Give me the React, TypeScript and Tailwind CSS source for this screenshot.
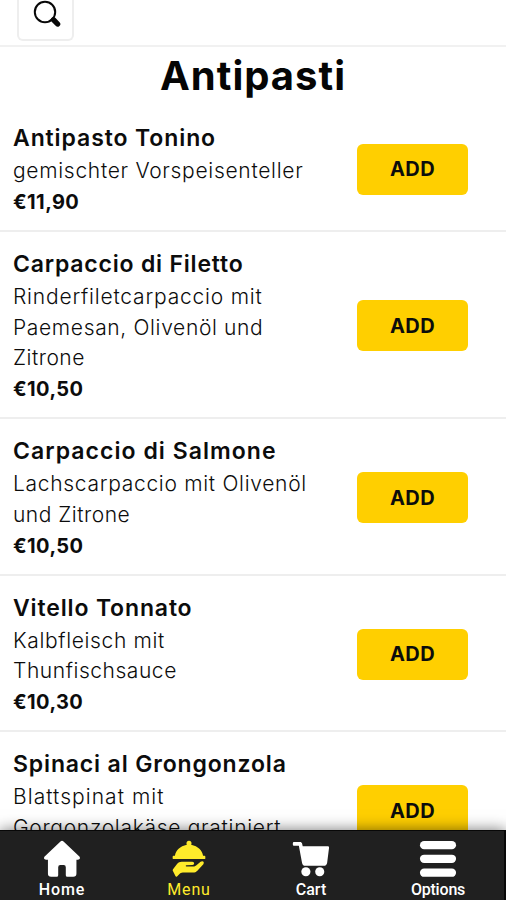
import clsx from "clsx";
import type { ReactNode } from "react";

type Dish = {
	name: string;
	nameTracking: string;
	lines: { text: string; tracking: string }[];
	price?: string;
};

const dishes: Dish[] = [
	{
		name: "Antipasto Tonino",
		nameTracking: "tracking-[0.9px]",
		lines: [{ text: "gemischter Vorspeisenteller", tracking: "tracking-[0.7px]" }],
		price: "€11,90",
	},
	{
		name: "Carpaccio di Filetto",
		nameTracking: "tracking-[0.8px]",
		lines: [
			{ text: "Rinderfiletcarpaccio mit", tracking: "tracking-[0.8px]" },
			{ text: "Paemesan, Olivenöl und", tracking: "tracking-[0.65px]" },
			{ text: "Zitrone", tracking: "tracking-[0.5px]" },
		],
		price: "€10,50",
	},
	{
		name: "Carpaccio di Salmone",
		nameTracking: "tracking-[1.05px]",
		lines: [
			{ text: "Lachscarpaccio mit Olivenöl", tracking: "tracking-[0.7px]" },
			{ text: "und Zitrone", tracking: "tracking-[0.5px]" },
		],
		price: "€10,50",
	},
	{
		name: "Vitello Tonnato",
		nameTracking: "tracking-[0.85px]",
		lines: [
			{ text: "Kalbfleisch mit", tracking: "tracking-[0.65px]" },
			{ text: "Thunfischsauce", tracking: "tracking-[0.55px]" },
		],
		price: "€10,30",
	},
	{
		name: "Spinaci al Grongonzola",
		nameTracking: "tracking-[0.85px]",
		lines: [
			{ text: "Blattspinat mit", tracking: "tracking-[1.05px]" },
			{ text: "Gorgonzolakäse gratiniert", tracking: "tracking-[0.7px]" },
		],
	},
];

const SearchIcon = () => (
	<svg width="28" height="28" viewBox="0 0 28 28" fill="none" stroke="#080808">
		<circle cx="12" cy="12" r="10.2" strokeWidth="2" />
		<path d="M18.6 18.8l2 2" strokeWidth="3" />
		<path d="M20.6 19.8l4 4.2" strokeWidth="5.4" strokeLinecap="round" />
	</svg>
);

const HomeIcon = () => (
	<svg width="40" height="40" viewBox="0 0 40 40" fill="currentColor">
		<path d="M18.4 1.6a2.3 2.3 0 0 1 3.2 0L38 17.2c1.7 1.6.9 3.6-1.2 3.6h-1.6v14.4a3.4 3.4 0 0 1-3.4 3.4h-6.2a1.6 1.6 0 0 1-1.6-1.6v-8.4a2.2 2.2 0 0 0-2.2-2.2h-3.6a2.2 2.2 0 0 0-2.2 2.2V37a1.6 1.6 0 0 1-1.6 1.6H8.6a3.4 3.4 0 0 1-3.4-3.4V20.8H3.2c-2.1 0-2.9-2-1.2-3.6z" />
	</svg>
);

const MenuIcon = () => (
	<svg width="40" height="40" viewBox="0 0 40 40" fill="currentColor">
		<path d="M20 .8a2.7 2.7 0 0 1 2.3 4.1C29.4 6.4 34 10.8 34.8 16.6h1.5a.9.9 0 0 1 .9.9v1.6a.9.9 0 0 1-.9.9H3.7a.9.9 0 0 1-.9-.9v-1.6a.9.9 0 0 1 .9-.9h1.5C6 10.8 10.6 6.4 17.7 4.9A2.7 2.7 0 0 1 20 .8z" />
		<path d="M3.2 32.9c-.5-.8-.4-1.3 0-2l4.2-5.6c1.3-1.7 2.8-2.5 5-2.5h11c2.6 0 2.7 3.2.2 3.5l-6.4.4c-.9.2-.8 1.2.1 1.2l7 .1c1.5 0 2.5-.5 3.5-1.4l4.4-3.6c2.2-1.5 4.4.2 2.9 2.4l-6.3 7c-1.3 1.4-2.7 1.9-4.6 1.9H13.6c-1.8 0-2.9.8-4.4 2.4l-1.8 1.7c-.6.5-1.2.4-1.7-.4z" />
	</svg>
);

const CartIcon = () => (
	<svg width="40" height="40" viewBox="0 0 40 40" fill="currentColor">
		<path d="M2 2h6.4c1.1 0 2 .7 2.2 1.8l.7 2.8h26.4c.9 0 1.4.7 1.3 1.5l-2 15.8a3.8 3.8 0 0 1-3.7 3.3H14.3a3.8 3.8 0 0 1-3.7-3.1L7.2 6H2a1.1 1.1 0 0 1-1.1-1.1V3.1A1.1 1.1 0 0 1 2 2z" />
		<circle cx="14.6" cy="33.4" r="4.8" />
		<circle cx="29.2" cy="33.4" r="4.8" />
	</svg>
);

const OptionsIcon = () => (
	<svg width="40" height="40" viewBox="0 0 40 40" fill="currentColor">
		<rect x="1" y="1" width="38" height="8.8" rx="4.4" />
		<rect x="1" y="15.4" width="38" height="8.8" rx="4.4" />
		<rect x="1" y="30" width="38" height="8.8" rx="4.4" />
	</svg>
);

const NavItem = ({
	label,
	icon,
	active,
	className,
}: {
	label: string;
	icon: ReactNode;
	active?: boolean;
	className: string;
}) => (
	<button
		className={clsx(
			"flex flex-col items-center pt-[9px]",
			active ? "text-[#ffeb2b]" : "text-white",
			className
		)}
	>
		{icon}
		<span className="pt-[2px] text-[16px] leading-[20px]">{label}</span>
	</button>
);

const DishRow = ({ dish }: { dish: Dish }) => (
	<li className="flex items-center justify-between border-b-2 border-[#eeeeee] pt-[15px] pb-[12.5px] pl-[13px] pr-[38px]">
		<div className="whitespace-nowrap text-[#0c0c0c]">
			<h2 className={clsx("pb-px text-[23px] leading-[34px] font-semibold", dish.nameTracking)}>
				{dish.name}
			</h2>
			{dish.lines.map((line) => (
				<p
					key={line.text}
					className={clsx("text-[21px] leading-[30.7px] font-light", line.tracking)}
				>
					{line.text}
				</p>
			))}
			<p className="h-[30.7px] text-[20px] leading-[30.7px] font-bold tracking-[0.4px]">
				{dish.price}
			</p>
		</div>
		<button className="h-[51px] w-[111px] shrink-0 rounded-md bg-[#ffcf00] text-[20px] font-bold tracking-[0.4px] text-[#0c0c0c]">
			ADD
		</button>
	</li>
);

export default function App() {
	return (
		<div className="flex h-[900px] w-full flex-col overflow-hidden bg-white font-[Inter,sans-serif]">
			<main className="min-h-0 flex-1 overflow-hidden">
				<header className="flex h-[47px] items-start border-b-2 border-[#f1f1f1] pl-[17px]">
					<button className="flex h-[41px] w-[57px] justify-center rounded-b-md border-2 border-t-0 border-[#eeeeee] pl-[2px]">
						<SearchIcon />
					</button>
				</header>
				<h1 className="h-[59px] text-center text-[40px] leading-[58px] font-bold tracking-[1px] text-[#050505]">
					Antipasti
				</h1>
				<ul>
					{dishes.map((dish) => (
						<DishRow key={dish.name} dish={dish} />
					))}
				</ul>
			</main>
			<nav className="relative flex h-[70px] shrink-0 border-t border-r-2 border-[#080808] bg-[#202020] font-[Roboto,sans-serif] shadow-[0_0_14px_rgba(0,0,0,0.55)]">
				<NavItem label="Home" icon={<HomeIcon />} className="w-[124px] font-medium tracking-[0.9px]" />
				<NavItem label="Menu" icon={<MenuIcon />} active className="w-[130px] tracking-[0.8px]" />
				<NavItem label="Cart" icon={<CartIcon />} className="w-[114px] font-medium" />
				<NavItem label="Options" icon={<OptionsIcon />} className="flex-1 pl-[4px] font-medium tracking-[-0.2px]" />
			</nav>
		</div>
	);
}
